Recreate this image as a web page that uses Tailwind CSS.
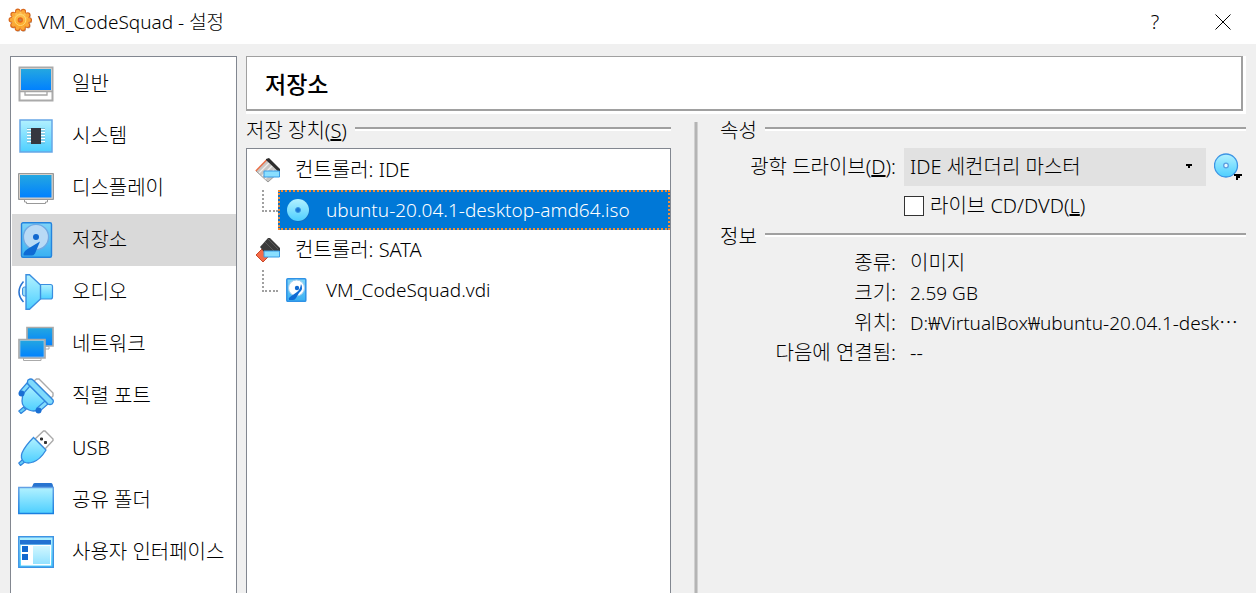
<!DOCTYPE html>
<html lang="ko">
<head>
  <meta charset="UTF-8" />
  <meta name="viewport" content="width=device-width, initial-scale=1" />
  <title>VM_CodeSquad - 설정</title>
  <script src="https://cdn.jsdelivr.net/npm/@tailwindcss/browser@4"></script>
</head>
<body class="bg-[#f0f0f0] text-black h-screen flex flex-col overflow-hidden font-['Noto_Sans','Noto_Sans_CJK_KR',sans-serif]">

  <!-- Shared gradients -->
  <svg class="absolute w-0 h-0" aria-hidden="true">
    <defs>
      <linearGradient id="screen" x1="0" y1="0" x2="0" y2="1"><stop offset="0" stop-color="#25a8e0" /><stop offset="1" stop-color="#0080ff" /></linearGradient>
      <linearGradient id="cyan" x1="0" y1="0" x2="0" y2="1"><stop offset="0" stop-color="#b2f1ff" /><stop offset="1" stop-color="#4dcfff" /></linearGradient>
      <linearGradient id="drive" x1="0" y1="0" x2="0" y2="1"><stop offset="0" stop-color="#7fd4f8" /><stop offset="1" stop-color="#38b0f2" /></linearGradient>
      <linearGradient id="edge" x1="0" y1="0" x2="0" y2="1"><stop offset="0" stop-color="#62a0e4" /><stop offset="1" stop-color="#1a7fe0" /></linearGradient>
      <linearGradient id="gear" x1="0" y1="0" x2="0" y2="1"><stop offset="0" stop-color="#ffc95a" /><stop offset="1" stop-color="#fba01e" /></linearGradient>
    </defs>
  </svg>

  <!-- Title bar -->
  <header class="bg-white h-11 shrink-0 flex items-center pl-2">
    <svg class="w-6 h-6 mr-1.5 -mt-1" viewBox="0 0 24 24" aria-hidden="true">
      <circle cx="13" cy="13" r="9" fill="none" stroke="#b9b0a8" stroke-width="4.500" stroke-linecap="round" stroke-dasharray="0 5.650" />
      <circle cx="12.300" cy="12" r="9" fill="none" stroke="#d9681c" stroke-width="5.500" stroke-linecap="round" stroke-dasharray="0 5.650" />
      <circle cx="12.300" cy="12" r="8.500" fill="url(#gear)" />
      <circle cx="12.300" cy="12" r="8.500" fill="none" stroke="#fba838" stroke-width="4" stroke-linecap="round" stroke-dasharray="0 5.340" />
      <circle cx="12.300" cy="12" r="5.500" fill="none" stroke="#ffd878" stroke-width="1" />
      <circle cx="12.300" cy="12" r="2" fill="#b98a50" stroke="#e8641c" stroke-width="1.300" />
    </svg>
    <h1 class="flex-1 text-[19px] font-light">VM_CodeSquad - 설정</h1>
    <button class="w-[70px] h-11 text-xl font-light" aria-label="도움말">?</button>
    <button class="w-[66px] h-11 flex items-center justify-center" aria-label="닫기">
      <svg class="w-4 h-4" viewBox="0 0 16 16"><path d="M.5.5l15 15M15.500.5l-15 15" stroke="#000" stroke-width="1" /></svg>
    </button>
  </header>

  <div class="flex-1 min-h-0 flex gap-[9px] pt-3 px-2.5">

    <!-- Categories -->
    <nav class="w-[227px] shrink-0 bg-white border border-b-0 border-[#828790] p-px pr-0 text-xl font-light whitespace-nowrap overflow-hidden">
      <button class="w-full h-[52px] pl-1.5 flex items-center gap-[18px]">
        <svg class="w-9 h-9" viewBox="0 0 36 36"><path d="M1.500 1.500h33v33h-33z" fill="#fff" stroke="#aaa" stroke-width="2" /><path d="M2.500 2.500h31v22h-31z" fill="url(#screen)" stroke="#d0ccc8" /><path d="M1 25.500h34M7 26v3h22v-3" fill="none" stroke="#a5a5a5" stroke-width="1.300" /></svg>
        <span>일반</span>
      </button>
      <button class="w-full h-[52px] pl-1.5 flex items-center gap-[18px]">
        <svg class="w-9 h-9" viewBox="0 0 36 36"><path d="M2 2h32v32H2z" fill="url(#cyan)" stroke="#67a6e6" stroke-width="1.500" /><path d="M9 11.500h18M9 14.500h18M9 17.500h18M9 20.500h18M9 23.500h18" stroke="#fff" stroke-width="1.500" /><path d="M9 10.500h18M9 13h18M9 16h18M9 19h18M9 22h18M9 25h18" stroke="#5aa6c4" stroke-width=".7" /><path d="M13 10h10v16H13z" fill="#35373f" /></svg>
        <span>시스템</span>
      </button>
      <button class="w-full h-[52px] pl-1.5 flex items-center gap-[18px]">
        <svg class="w-9 h-9" viewBox="0 0 36 36"><path d="M6.500 28h23v4h-2v1.500h-19V32h-2z" fill="#fff" stroke="#999" /><path d="M.5 3.500h35v26H.5z" fill="#bbb" stroke="#999" stroke-width="1" /><path d="M1.500 4.500H34V28H1.500z" fill="url(#screen)" stroke="#d8d0c8" /></svg>
        <span>디스플레이</span>
      </button>
      <button class="w-full h-[52px] pl-1.5 flex items-center gap-[18px] bg-[#d9d9d9]" aria-current="page">
        <svg class="w-9 h-9" viewBox="0 0 36 36"><rect x="3.500" y=".7" width="30" height="34.600" rx="1.500" fill="url(#drive)" stroke="#2483dd" stroke-width="1.400" /><circle cx="18" cy="15" r="12.600" fill="#b9daf5" stroke="#6faae4" stroke-width="1.400" /><circle cx="18" cy="15" r="3" fill="#1269cf" /><path d="M22 19.500L17 31.500q-1 2-3.500 2H5.500v-2q1-3 4-4.500z" fill="#0f6bd4" /></svg>
        <span>저장소</span>
      </button>
      <button class="w-full h-[52px] pl-1.5 flex items-center gap-[18px]">
        <svg class="w-9 h-9" viewBox="0 0 36 36"><path d="M5.500 7.500q-9 10.500 0 20.500" fill="none" stroke="#2a74d0" stroke-width="1.500" /><path d="M8 13H6.500Q4.500 13 4.500 15v5q0 2 2 2H8" fill="#9adcf8" stroke="#3a8ee0" /><path d="M22 10.500h10.500q2 0 2 2V23q0 2-2 2H22z" fill="url(#cyan)" stroke="#3a8ee0" stroke-width="1.200" /><path d="M8 .8h3.500L22.500 11v14L11.500 35.200H8z" fill="url(#cyan)" stroke="#3a8ee0" stroke-width="1.400" /></svg>
        <span>오디오</span>
      </button>
      <button class="w-full h-[52px] pl-1.5 flex items-center gap-[18px]">
        <svg class="w-9 h-9" viewBox="0 0 36 36"><path d="M14 20.500h17v2.500H14z" fill="#fff" stroke="#aaa" /><path d="M9 1.500h26v18.500H9z" fill="url(#screen)" stroke="#aaa" stroke-width="1.700" /><path d="M5.500 32h17.500v2.500H5.500z" fill="#fff" stroke="#aaa" /><path d="M1 13.500h26v18.500H1z" fill="url(#screen)" stroke="#aaa" stroke-width="1.700" /><path d="M2 14.500h24v16.500H2z" fill="none" stroke="#c8d0d8" stroke-width=".6" /></svg>
        <span>네트워크</span>
      </button>
      <button class="w-full h-[52px] pl-1.5 flex items-center gap-[18px]">
        <svg class="w-9 h-9" viewBox="0 0 36 36"><path d="M16 3l2.500-2h2.500l14 14v3l-2 2z" fill="#fff" stroke="#aaa" stroke-width="1.400" /><path d="M5.500 29l2.500 2.500-5 4L.8 33z" fill="#67cdf7" stroke="#2c82dc" stroke-width="1.200" /><path d="M10 6L29 25q-3 1-6 4-5 6-12 3-7-3-7-9 0-5 2-9z" fill="url(#cyan)" stroke="#3489df" stroke-width="1.300" /><path d="M9 5l3 3-7 8-3-3zM27 23l3 3-8 7-3-3z" fill="#83dcfc" stroke="#2f86df" stroke-width="1.200" /><path d="M10 2q3-2 5 0l20 20q1 2-1 4-2 1-4 0L10 6q-1-2 0-4z" fill="#7fdafc" stroke="#2f86df" stroke-width="1.300" /><circle cx="3.500" cy="15.500" r="3" fill="#1a6fd4" /><circle cx="20.500" cy="32.500" r="3" fill="#1a6fd4" /></svg>
        <span>직렬 포트</span>
      </button>
      <button class="w-full h-[52px] pl-1.5 flex items-center gap-[18px]">
        <svg class="w-9 h-9" viewBox="0 0 36 36"><path d="M17 9l8.500-8h1.500l8 8v1.500L27 19z" fill="#fff" stroke="#aaa" stroke-width="1.400" /><path d="M22.500 8h2v2h-2zM26.500 11.500h2v2h-2z" fill="#333" stroke="#333" /><path d="M5 29l2.500 2.500-5 4L.8 33z" fill="#67cdf7" stroke="#2c82dc" stroke-width="1.200" /><path d="M15.500 7.500L28 20q-6 10-13 12-5 2-9 0-4-4-2-9 3-7 11.500-15.500z" fill="url(#cyan)" stroke="#3489df" stroke-width="1.300" /></svg>
        <span>USB</span>
      </button>
      <button class="w-full h-[52px] pl-1.5 flex items-center gap-[18px]">
        <svg class="w-9 h-9" viewBox="0 0 36 36"><path d="M13.500 6l2-4.500Q15.700 1 17 1h16q1 0 1.500 1L35.500 6z" fill="#2874d0" /><path d="M.8 5.500h34.500v26H.8z" fill="url(#cyan)" stroke="url(#edge)" stroke-width="1.500" /></svg>
        <span>공유 폴더</span>
      </button>
      <button class="w-full h-[52px] pl-1.5 flex items-center gap-[18px]">
        <svg class="w-9 h-9" viewBox="0 0 36 36"><path d="M.8 2.800h34.500v30.500H.8z" fill="url(#cyan)" stroke="#3d94e4" stroke-width="1.500" /><path d="M2 6h31v4.500H2z" fill="#2272d2" /><path d="M3 11h30v20.500H3z" fill="#fff" /><path d="M4 12h6v6H4zM4 20h6v6H4z" fill="#1068cf" /><path d="M15 12h17v18H15z" fill="url(#cyan)" opacity=".6" /></svg>
        <span>사용자 인터페이스</span>
      </button>
    </nav>

    <!-- Storage page -->
    <main class="flex-1 min-w-0 flex flex-col text-xl font-light">
      <div class="bg-white h-[58px] shrink-0 pr-[3px] pb-[3px]">
        <div class="h-full border border-r-2 border-b-2 border-[#a0a0a0] pl-[18px] pt-0.5 flex items-center">
          <h2 class="text-[23px] font-medium">저장소</h2>
        </div>
      </div>

      <div class="flex-1 min-h-0 grid grid-cols-[425fr_49px_526fr] pt-1.5">

        <!-- Storage devices -->
        <section class="min-w-0 flex flex-col">
          <div class="h-[22px] mb-1.5 shrink-0 flex items-center gap-2">
            <h3 class="leading-5">저장 장치(<u>S</u>)</h3>
            <div class="flex-1 h-1 bg-white border-t-2 border-[#a0a0a0] mb-1"></div>
          </div>
          <ul class="flex-1 bg-white border border-b-0 border-[#828790] pt-px">
            <li class="h-10 pl-2 flex items-center gap-3">
              <svg class="w-7 h-7" viewBox="0 0 28 28"><path d="M1 15L12 4l12 12-11 10z" fill="#c9c6c3" stroke="#999" /><path d="M4 17L15 6M7 20L18 9M10 23l9-9" stroke="#eee" stroke-width="1.300" /><path d="M.8 15L12 3.500" stroke="#ec7048" stroke-width="1.500" /><path d="M11 3l3-1 11 11v4L11 4z" fill="#2d2d2d" /><path d="M9 15h15.500v6H9z" fill="#8adfff" stroke="#399be5" /></svg>
              <span>컨트롤러: IDE</span>
            </li>
            <li class="h-10 pl-[15px] flex">
              <span class="w-4 h-[22px] border-l-2 border-b-2 border-dotted border-[#a0a0a0]"></span>
              <div class="flex-1 h-10 bg-[#0078d7] text-white text-[19px] border-2 border-dotted border-[#f58a32] pl-1.5 flex items-center gap-4">
                <svg class="w-6 h-6" viewBox="0 0 24 24"><circle cx="12.500" cy="12.500" r="11" fill="#1668b8" /><circle cx="12" cy="12" r="11" fill="url(#cyan)" /><circle cx="12" cy="12" r="2.500" fill="#1978d4" stroke="#3a98e4" /></svg>
                <span>ubuntu-20.04.1-desktop-amd64.iso</span>
              </div>
            </li>
            <li class="h-10 pl-2 flex items-center gap-3">
              <svg class="w-7 h-7" viewBox="0 0 28 28"><path d="M1 19l7-7 7 7-7 7z" fill="#f46b48" stroke="#c9482a" /><path d="M5 11l8-9h2l10 10v5l-3 4H13z" fill="#3b3b3b" /><path d="M13 3l10 10M10 6l10 10" stroke="#5a5a5a" /><path d="M9 15h15.500v6H9z" fill="#8adfff" stroke="#399be5" /></svg>
              <span>컨트롤러: SATA</span>
            </li>
            <li class="h-10 pl-[15px] flex">
              <span class="w-4 h-[22px] border-l-2 border-b-2 border-dotted border-[#a0a0a0]"></span>
              <div class="flex-1 h-10 pl-2 text-[19px] flex items-center gap-4">
                <svg class="w-6 h-6" viewBox="0 0 24 24"><rect x=".8" y=".8" width="19" height="22.500" rx="1" fill="url(#drive)" stroke="#2f92e6" stroke-width="1.500" /><circle cx="10.500" cy="10" r="8" fill="#fff" stroke="#9fcdf0" /><circle cx="11" cy="10" r="2.200" fill="#1269cf" /><path d="M15 6q3 5-2 9l-3 5q-1 2-3 2H3q-1-2 1-3l7-5q3-2 4-8z" fill="#0f6bd4" /></svg>
                <span>VM_CodeSquad.vdi</span>
              </div>
            </li>
          </ul>
        </section>

        <div class="w-1 mt-0.5 ml-[23px] bg-[#b4b4b4] border-x border-[#d0d0d0]"></div>

        <!-- Attributes and information -->
        <section class="min-w-0">
          <div class="h-[22px] mb-1.5 flex items-center gap-2">
            <h3 class="leading-5">속성</h3>
            <div class="flex-1 h-1 bg-white border-t-2 border-[#a0a0a0] mb-1"></div>
          </div>
          <div class="grid grid-cols-[176px_1fr] gap-x-2">
            <label for="drive-slot" class="h-[38px] flex items-center justify-end whitespace-nowrap">광학 드라이브(<u>D</u>):</label>
            <div class="flex items-center pr-1">
              <div class="relative flex-1">
                <select id="drive-slot" class="appearance-none w-full h-[38px] bg-[#e1e1e1] pl-1.5">
                  <option>IDE 세컨더리 마스터</option>
                </select>
                <svg class="absolute right-3.5 top-4 w-1.5 h-1 pointer-events-none" viewBox="0 0 6 4"><path d="M0 0h6v2H4v2H2V2H0z" /></svg>
              </div>
              <button class="ml-2 w-7 h-7" aria-label="디스크 선택">
                <svg class="w-7 h-7" viewBox="0 0 28 28"><circle cx="12" cy="12.500" r="11.500" fill="url(#cyan)" stroke="#3d94e4" stroke-width="1.300" /><circle cx="12" cy="12.500" r="2.300" fill="#e8f8ff" stroke="#5a9fe0" stroke-width="1.300" /><path d="M20 21h8v2h-2v2h-2v2h-2v-4h-2z" /></svg>
              </button>
            </div>
            <div class="col-start-2 h-10 flex items-center">
              <input id="live-cd" type="checkbox" class="appearance-none w-5 h-5 bg-white border border-[#333] mr-1.5" />
              <label for="live-cd">라이브 CD/DVD(<u>L</u>)</label>
            </div>
          </div>

          <div class="h-[22px] flex items-center gap-2">
            <h3 class="leading-5">정보</h3>
            <div class="flex-1 h-1 bg-white border-t-2 border-[#a0a0a0] mb-1"></div>
          </div>
          <dl class="grid grid-cols-[176px_1fr] gap-x-2 leading-[30px]">
            <dt class="text-right">종류:</dt>
            <dd class="pl-1.5">이미지</dd>
            <dt class="text-right">크기:</dt>
            <dd class="pl-1.5 text-[19px]">2.59 GB</dd>
            <dt class="text-right">위치:</dt>
            <dd class="pl-1.5 text-[19px] min-w-0 whitespace-nowrap">D:₩VirtualBox₩ubuntu-20.04.1-desk⋯</dd>
            <dt class="text-right">다음에 연결됨:</dt>
            <dd class="pl-1.5">--</dd>
          </dl>
        </section>
      </div>
    </main>
  </div>

</body>
</html>
